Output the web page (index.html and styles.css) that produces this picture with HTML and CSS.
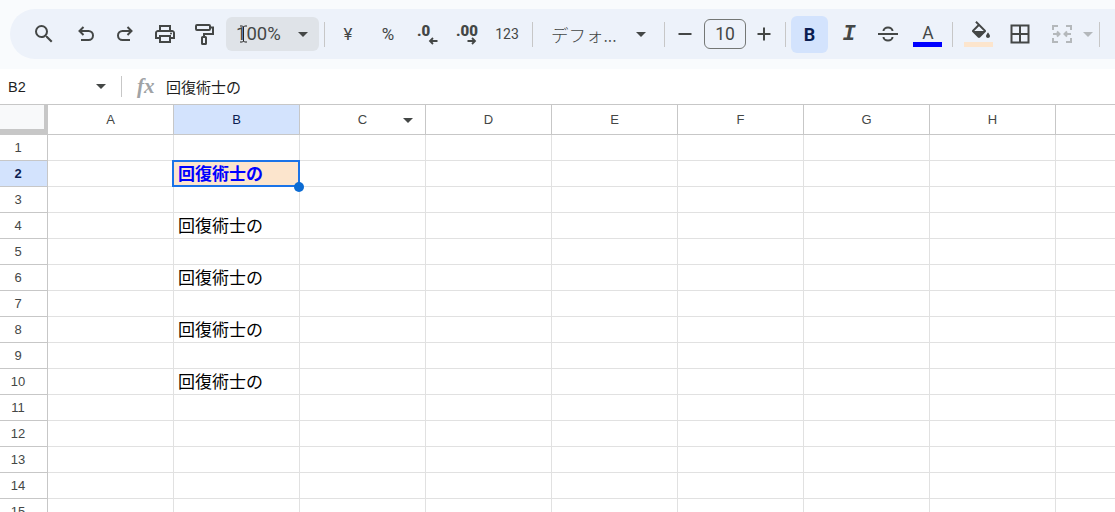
FILE: index.html
```html
<!DOCTYPE html>
<html lang="ja">
<head>
<meta charset="utf-8">
<title>Sheet</title>
<link rel="stylesheet" href="styles.css">
</head>
<body>
<header class="top">
  <div class="toolbar">
    <span class="tb first"><svg class="ic" viewBox="0 0 24 24"><path d="M15.5 14h-.79l-.28-.27A6.471 6.471 0 0 0 16 9.5 6.5 6.5 0 1 0 9.5 16c1.61 0 3.09-.59 4.23-1.57l.27.28v.79l5 4.99L20.49 19l-4.99-5zm-6 0C7.01 14 5 11.99 5 9.5S7.01 5 9.5 5 14 7.01 14 9.5 11.99 14 9.5 14z"/></svg></span>
    <span class="tb m6"><svg class="ic line" viewBox="0 0 24 24"><path d="M9.5 5 5.5 9l4 4M5.5 9H14.5a4.5 4.5 0 0 1 0 9H7"/></svg></span>
    <span class="tb m3"><svg class="ic line" viewBox="0 0 24 24"><path d="M14.5 5l4 4-4 4M18.5 9H9.5a4.5 4.5 0 0 0 0 9H17"/></svg></span>
    <span class="tb m4"><svg class="ic" viewBox="0 0 24 24"><path d="M19 8h-1V3H6v5H5c-1.66 0-3 1.34-3 3v6h4v4h12v-4h4v-6c0-1.66-1.34-3-3-3zM8 5h8v3H8V5zm8 12v2H8v-4h8v2zm2-2v-2H6v2H4v-4c0-.55.45-1 1-1h14c.55 0 1 .45 1 1v4h-2z"/><circle cx="18" cy="11.5" r="1"/></svg></span>
    <span class="tb m3"><svg class="ic line" viewBox="0 0 24 24"><rect x="4" y="3" width="14" height="5" rx="1"/><path d="M18 5.5h3V12h-9v3"/><rect x="10" y="15" width="4" height="7" rx=".6"/></svg></span>
    <div class="zoom">
      <span class="zoom-val">100%</span>
      <span class="caret"></span>
      <svg class="ibeam" viewBox="0 0 9 18"><path d="M1 1h2.500L4.500 2 5.500 1H8M4.500 2v14M1 17h2.500l1-1 1 1H8"/></svg>
    </div>
    <span class="sep s1"></span>
    <span class="tb t-sym m5">¥</span>
    <span class="tb t-sym m4">%</span>
    <span class="tb dec d1 m4"><b>.0</b><svg class="arrow" viewBox="0 0 10 8"><path d="M9.500 4H2M5 1 2 4l3 3"/></svg></span>
    <span class="tb dec d2 m4"><b>.00</b><svg class="arrow" viewBox="0 0 10 8"><path d="M.5 4H8M5 1l3 3-3 3"/></svg></span>
    <span class="tb t-num m3">123</span>
    <span class="sep s2"></span>
    <span class="font-name">デフォ...</span>
    <span class="caret c-font"></span>
    <span class="sep s3"></span>
    <span class="tb narrow minus"><svg class="ic line" viewBox="0 0 24 24"><path d="M5.500 12h13"/></svg></span>
    <span class="size">10</span>
    <span class="tb narrow plus"><svg class="ic line" viewBox="0 0 24 24"><path d="M5.500 12h13M12 5.500v13"/></svg></span>
    <span class="sep s4"></span>
    <span class="bold">B</span>
    <span class="tb italic m3">I</span>
    <span class="tb m3"><svg class="ic line" viewBox="0 0 24 24"><path d="M2 12h20M7.500 9a4.500 3.500 0 0 1 9 0M7.500 15a4.500 3.500 0 0 0 9 0"/></svg></span>
    <span class="tb swatch m4"><span class="letter">A</span><span class="bar blue"></span></span>
    <span class="sep s5"></span>
    <span class="tb swatch m8"><svg class="ic bucket" viewBox="0 0 24 24"><path d="M16.560 8.940 7.620 0 6.210 1.410l2.380 2.380-5.150 5.150c-.59.590-.59 1.540 0 2.120l5.500 5.500c.29.290.68.440 1.060.440s.77-.15 1.060-.44l5.500-5.500c.59-.58.59-1.530 0-2.120zM5.210 10 10 5.210 14.790 10H5.210zM19 11.500s-2 2.170-2 3.500c0 1.100.9 2 2 2s2-.9 2-2c0-1.330-2-3.500-2-3.500z"/><path d="M4 10h12l-6 6z"/></svg><span class="bar peach"></span></span>
    <span class="tb m5"><svg class="ic line" viewBox="0 0 24 24"><path d="M3.500 3.500h17v17h-17zM12 3.500v17M3.500 12h17"/></svg></span>
    <span class="tb m6"><svg class="ic line off" viewBox="0 0 24 24"><path d="M3 8V4h5M3 16v4h5M21 8V4h-5M21 16v4h-5M3 12h6M7 9.500 9.500 12 7 14.500M21 12h-6M17 9.500 14.500 12l2.500 2.500"/></svg></span>
    <span class="caret c-merge"></span>
    <span class="sep s6"></span>
  </div>
</header>

<div class="formula">
  <span class="name">B2</span>
  <span class="caret c-name"></span>
  <span class="f-sep"></span>
  <span class="fx">fx</span>
  <span class="f-text">回復術士の</span>
</div>

<main class="grid">
  <div class="corner"></div>
  <div class="ch">A</div>
  <div class="ch on">B</div>
  <div class="ch">C<span class="caret c-col"></span></div>
  <div class="ch">D</div>
  <div class="ch">E</div>
  <div class="ch">F</div>
  <div class="ch">G</div>
  <div class="ch">H</div>
  <div class="ch"></div>

  <div class="rh">1</div><div class="c"></div><div class="c"></div><div class="c"></div><div class="c"></div><div class="c"></div><div class="c"></div><div class="c"></div><div class="c"></div><div class="c"></div>
  <div class="rh on">2</div><div class="c"></div><div class="c active">回復術士の<span class="handle"></span></div><div class="c"></div><div class="c"></div><div class="c"></div><div class="c"></div><div class="c"></div><div class="c"></div><div class="c"></div>
  <div class="rh">3</div><div class="c"></div><div class="c"></div><div class="c"></div><div class="c"></div><div class="c"></div><div class="c"></div><div class="c"></div><div class="c"></div><div class="c"></div>
  <div class="rh">4</div><div class="c"></div><div class="c">回復術士の</div><div class="c"></div><div class="c"></div><div class="c"></div><div class="c"></div><div class="c"></div><div class="c"></div><div class="c"></div>
  <div class="rh">5</div><div class="c"></div><div class="c"></div><div class="c"></div><div class="c"></div><div class="c"></div><div class="c"></div><div class="c"></div><div class="c"></div><div class="c"></div>
  <div class="rh">6</div><div class="c"></div><div class="c">回復術士の</div><div class="c"></div><div class="c"></div><div class="c"></div><div class="c"></div><div class="c"></div><div class="c"></div><div class="c"></div>
  <div class="rh">7</div><div class="c"></div><div class="c"></div><div class="c"></div><div class="c"></div><div class="c"></div><div class="c"></div><div class="c"></div><div class="c"></div><div class="c"></div>
  <div class="rh">8</div><div class="c"></div><div class="c">回復術士の</div><div class="c"></div><div class="c"></div><div class="c"></div><div class="c"></div><div class="c"></div><div class="c"></div><div class="c"></div>
  <div class="rh">9</div><div class="c"></div><div class="c"></div><div class="c"></div><div class="c"></div><div class="c"></div><div class="c"></div><div class="c"></div><div class="c"></div><div class="c"></div>
  <div class="rh">10</div><div class="c"></div><div class="c">回復術士の</div><div class="c"></div><div class="c"></div><div class="c"></div><div class="c"></div><div class="c"></div><div class="c"></div><div class="c"></div>
  <div class="rh">11</div><div class="c"></div><div class="c"></div><div class="c"></div><div class="c"></div><div class="c"></div><div class="c"></div><div class="c"></div><div class="c"></div><div class="c"></div>
  <div class="rh">12</div><div class="c"></div><div class="c"></div><div class="c"></div><div class="c"></div><div class="c"></div><div class="c"></div><div class="c"></div><div class="c"></div><div class="c"></div>
  <div class="rh">13</div><div class="c"></div><div class="c"></div><div class="c"></div><div class="c"></div><div class="c"></div><div class="c"></div><div class="c"></div><div class="c"></div><div class="c"></div>
  <div class="rh">14</div><div class="c"></div><div class="c"></div><div class="c"></div><div class="c"></div><div class="c"></div><div class="c"></div><div class="c"></div><div class="c"></div><div class="c"></div>
  <div class="rh">15</div><div class="c"></div><div class="c"></div><div class="c"></div><div class="c"></div><div class="c"></div><div class="c"></div><div class="c"></div><div class="c"></div><div class="c"></div>
</main>
</body>
</html>
```

FILE: styles.css
```css
* { box-sizing: border-box; }
html, body { margin: 0; height: 512px; overflow: hidden; background: #fff; }
body { font-family: "Liberation Sans", Arial, "Noto Sans CJK JP", sans-serif; color: #444746; }

.top { height: 69px; padding: 9px 0 0 10px; background: #f9fbfd; }
.toolbar {
  height: 50px;
  padding-left: 16px;
  display: flex;
  align-items: center;
  background: #edf2fa;
  border-radius: 25px 0 0 25px;
  overflow: hidden;
}
.tb { flex: none; width: 36px; height: 36px; display: flex; align-items: center; justify-content: center; position: relative; }
.m3 { margin-left: 3px; }
.m4 { margin-left: 4px; }
.m5 { margin-left: 5px; }
.m6 { margin-left: 6px; }
.m8 { margin-left: 8px; }
.ic { width: 24px; height: 24px; fill: #444746; flex: none; }
.ic.line { fill: none; stroke: #444746; stroke-width: 2; }
.ic.line.off { stroke: #b4b8bb; }

.caret { flex: none; width: 0; height: 0; border-left: 5px solid transparent; border-right: 5px solid transparent; border-top: 5px solid #444746; }

.zoom {
  flex: none; width: 93px; height: 34px; margin-left: 4px; padding: 0 11px 0 10px;
  background: #dfe3e8; border-radius: 6px;
  display: flex; align-items: center; justify-content: space-between;
  position: relative;
}
.zoom-val { font: 18.500px "Roboto", sans-serif; color: #444746; }
.ibeam { position: absolute; left: 13px; top: 8px; width: 9px; height: 18px; fill: none; stroke: #222; stroke-width: 1; }

.sep { flex: none; width: 1px; height: 25px; background: #c7c7c7; }
.s1 { margin-left: 5px; }
.s2 { margin-left: 7px; }
.s3 { margin-left: 18px; }
.s4 { margin-left: 9px; }
.s5 { margin-left: 6px; }
.s6 { margin-left: 6px; }

.t-sym { font: 17px "Roboto", sans-serif; }
.t-num { font: 14px "Roboto", sans-serif; }
.dec { flex-direction: column; align-items: flex-start; font: bold 15px/16px "Roboto", sans-serif; color: #444746; }
.d1 { padding-left: 7px; }
.d2 { padding-left: 6px; }
.arrow { width: 10px; height: 8px; margin: -2px 0 0 11px; fill: none; stroke: #444746; stroke-width: 1.800; }

.font-name { flex: none; width: 74px; margin-left: 18px; font: 300 17.500px "Noto Sans CJK JP", sans-serif; color: #444746; white-space: nowrap; overflow: hidden; }
.c-font { margin-left: 11px; }

.narrow { width: 24px; }
.minus { margin-left: 8px; }
.size { flex: none; width: 42px; height: 30px; margin-left: 7px; border: 1px solid #747775; border-radius: 6px; font: 17.500px/28px "Roboto", sans-serif; text-align: center; color: #444746; }
.plus { margin-left: 6px; }

.bold { flex: none; width: 37px; height: 37px; margin-left: 5px; background: #d3e3fd; border-radius: 6px; font: bold 18px/37px "Roboto", sans-serif; text-align: center; color: #0b1d51; }
.italic { font: italic bold 22px "Liberation Mono", monospace; color: #444746; }

.swatch { flex-direction: column; justify-content: flex-start; padding-top: 7px; }
.letter { font: 17.500px/20px "Roboto", sans-serif; color: #444746; height: 20px; }
.bar { position: absolute; left: 3px; bottom: 5px; width: 29px; height: 5px; }
.blue { background: #0000ff; }
.peach { background: #fce5cd; }
.bucket { margin-top: -2px; margin-left: 3px; }
.c-merge { margin-left: 3px; border-top-color: #b4b8bb; }

.formula { height: 35px; padding-left: 8px; display: flex; align-items: center; background: #fff; }
.name { flex: none; width: 88px; font-size: 14.500px; color: #1f1f1f; }
.f-sep { flex: none; width: 1px; height: 21px; margin-left: 15px; background: #c7c7c7; }
.fx { flex: none; width: 18px; margin-left: 15px; font: italic bold 21px "Liberation Serif", serif; color: #a0a3a6; }
.f-text { margin-left: 11px; font: 400 15px "Noto Sans CJK JP", sans-serif; color: #1f1f1f; }

.grid {
  display: grid;
  grid-template-columns: 48px repeat(9, 126px);
  grid-template-rows: 30px repeat(15, 26px);
  border-top: 1px solid #c7c7c7;
  width: 1115px;
  overflow: hidden;
}
.corner { background: #f8f9fa; border-right: 4px solid #c7c7c7; border-bottom: 6px solid #c7c7c7; }
.ch {
  border-right: 1px solid #c7c7c7; border-bottom: 1px solid #c7c7c7;
  display: flex; align-items: center; justify-content: center;
  font-size: 13px; color: #444746; position: relative; background: #fff;
}
.ch.on { background: #d3e3fd; color: #0b1d51; }
.c-col { position: absolute; right: 12px; top: 13px; }
.rh {
  border-right: 1px solid #c7c7c7; border-bottom: 1px solid #c7c7c7;
  display: flex; align-items: center; justify-content: center; padding-right: 11px;
  font-size: 13px; color: #444746; background: #fff;
}
.rh.on { background: #d3e3fd; color: #0b1d51; font-weight: bold; }
.c {
  border-right: 1px solid #e1e1e1; border-bottom: 1px solid #e1e1e1;
  padding: 0 0 2px 4px;
  display: flex; align-items: center;
  font: 400 17px "Noto Sans CJK JP", sans-serif; color: #000; white-space: nowrap;
  position: relative;
}
.c.active { background: #fce5cd; color: #0000ff; font-weight: bold; z-index: 1; }
.c.active::after { content: ""; position: absolute; left: -2px; top: -1px; right: -1px; bottom: -1px; border: 2px solid #1a73e8; }
.handle { position: absolute; right: -5px; bottom: -6px; width: 10px; height: 10px; background: #0b6bd3; border-radius: 50%; z-index: 2; }
```
